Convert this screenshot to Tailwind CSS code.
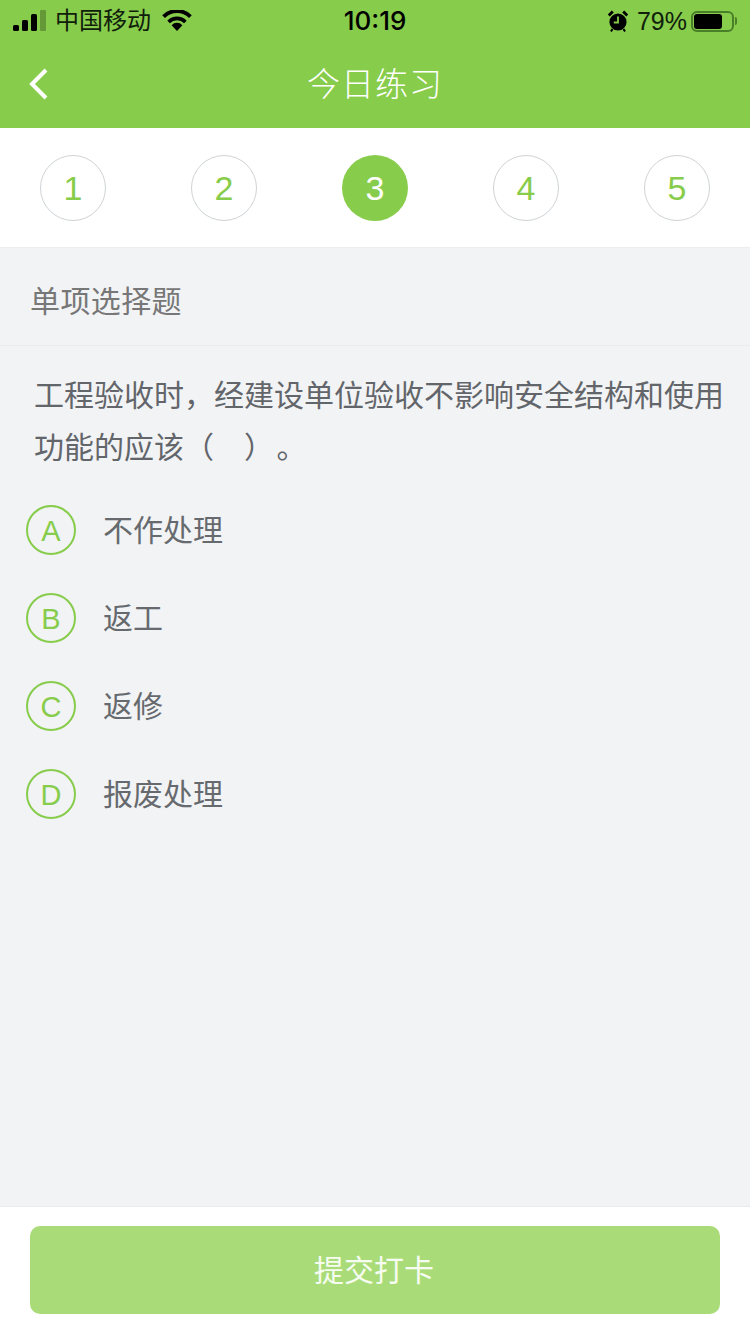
<!doctype html>
<html lang="zh-CN"><head><meta charset="utf-8"><script src="https://cdn.jsdelivr.net/npm/@tailwindcss/browser@4"></script></head>
<body class="m-0">
<div class="w-[750px] h-[1334px] flex flex-col overflow-hidden bg-[#f2f3f5] font-['Helvetica','Liberation_Sans','Noto_Sans_CJK_SC',sans-serif]">
  <header class="h-[128px] bg-[#87cc4b] shrink-0 flex flex-col">
    <div class="h-[42px] flex items-center justify-between text-black relative pl-[13px] pr-[13px]">
      <div class="flex items-center">
        <svg width="33" height="22" viewBox="0 0 33 22" class="mr-[9px]"><rect x="0" y="15" width="6" height="6" rx="1.5" fill="#000"/><rect x="9" y="10" width="6" height="11" rx="1.5" fill="#000"/><rect x="18" y="4" width="6" height="17" rx="1.5" fill="#000"/><rect x="27" y="0" width="6" height="21" rx="1" fill="#000" fill-opacity=".25"/></svg>
        <span class="text-[24px] leading-[40px] text-[#10200a]">中国移动</span>
        <svg width="30" height="22" viewBox="0 0 30 22" class="ml-[11px]"><path d="M15 21 9.6 15.2a7.4 7.4 0 0 1 10.8 0Z" fill="#000"/><path d="M6.6 11.9a11.8 11.8 0 0 1 16.8 0" fill="none" stroke="#000" stroke-width="3.6"/><path d="M1.6 6.6a19 19 0 0 1 26.8 0" fill="none" stroke="#000" stroke-width="4"/></svg>
      </div>
      <span class="absolute left-0 right-0 text-center font-['Inter'] text-[26px] font-medium leading-[40px] pointer-events-none">10:19</span>
      <div class="flex items-center">
        <svg width="20" height="22" viewBox="0 0 20 22" class="mr-[9px]"><circle cx="10" cy="12" r="8.6" fill="#000"/><path d="M10 6.5V12.5H5.8" fill="none" stroke="#87cc4b" stroke-width="1.8"/><path d="M.8 5.5 4.8 1.5M19.2 5.5 15.2 1.5" stroke="#000" stroke-width="2.8"/><path d="M4.5 19 3 21.5M15.5 19 17 21.5" stroke="#000" stroke-width="2"/></svg>
        <span class="text-[25px] leading-[40px] text-[#10200a]">79%</span>
        <div class="ml-[4px] flex items-center">
          <div class="w-[43px] h-[21px] rounded-[6px] border-2 border-[#4a7f2a] p-[1px] flex"><div class="w-[28px] h-full rounded-[3px] bg-black"></div></div>
          <div class="w-[2px] h-[8px] bg-[#4a7f2a] rounded-r-sm ml-[1px]"></div>
        </div>
      </div>
    </div>
    <div class="relative flex-1 flex items-center justify-center">
      <svg width="22" height="34" viewBox="0 0 22 34" class="absolute left-[28px] top-[25px]"><path d="M18 3 4 17l14 14" fill="none" stroke="#fff" stroke-width="4"/></svg>
      <h1 class="text-[33px] text-white font-light leading-[86px] tracking-[1px]">今日练习</h1>
    </div>
  </header>
  <nav class="h-[120px] shrink-0 bg-white border-b border-[#ebedf0] flex items-center justify-between px-[40px]">
    <div class="w-[66px] h-[66px] rounded-full border border-[#cfd3d6] flex items-center justify-center text-[34px] leading-[68px] text-[#87cc4b]">1</div>
    <div class="w-[66px] h-[66px] rounded-full border border-[#cfd3d6] flex items-center justify-center text-[34px] leading-[68px] text-[#87cc4b]">2</div>
    <div class="w-[66px] h-[66px] rounded-full bg-[#87cc4b] flex items-center justify-center text-[34px] leading-[68px] text-white">3</div>
    <div class="w-[66px] h-[66px] rounded-full border border-[#cfd3d6] flex items-center justify-center text-[34px] leading-[68px] text-[#87cc4b]">4</div>
    <div class="w-[66px] h-[66px] rounded-full border border-[#cfd3d6] flex items-center justify-center text-[34px] leading-[68px] text-[#87cc4b]">5</div>
  </nav>
  <main class="flex-1 flex flex-col min-h-0">
    <div class="h-[98px] shrink-0 border-b border-[#e9ebee] pl-[30px] pt-[10px] flex items-center text-[30px] tracking-[.4px] text-[#777]">单项选择题</div>
    <p class="pl-[34px] pr-[20px] pt-[24px] text-[30px] leading-[52px] text-[#62656a] m-0">工程验收时，经建设单位验收不影响安全结构和使用功能的应该（　）&hairsp;。</p>
    <ul class="mt-[12px] pl-[26px] flex flex-col">
      <li class="h-[88px] flex items-center"><span class="w-[50px] h-[50px] rounded-full border-2 border-[#87cc4b] flex items-center justify-center text-[29px] pt-[4px] text-[#87cc4b]">A</span><span class="ml-[27px] text-[30px] text-[#666a6e]">不作处理</span></li>
      <li class="h-[88px] flex items-center"><span class="w-[50px] h-[50px] rounded-full border-2 border-[#87cc4b] flex items-center justify-center text-[29px] pt-[4px] text-[#87cc4b]">B</span><span class="ml-[27px] text-[30px] text-[#666a6e]">返工</span></li>
      <li class="h-[88px] flex items-center"><span class="w-[50px] h-[50px] rounded-full border-2 border-[#87cc4b] flex items-center justify-center text-[29px] pt-[4px] text-[#87cc4b]">C</span><span class="ml-[27px] text-[30px] text-[#666a6e]">返修</span></li>
      <li class="h-[88px] flex items-center"><span class="w-[50px] h-[50px] rounded-full border-2 border-[#87cc4b] flex items-center justify-center text-[29px] pt-[4px] text-[#87cc4b]">D</span><span class="ml-[27px] text-[30px] text-[#666a6e]">报废处理</span></li>
    </ul>
  </main>
  <footer class="h-[128px] shrink-0 bg-white border-t border-[#e9ebee] px-[30px] pt-[19px]">
    <button class="w-[690px] h-[88px] pr-[2px] rounded-[10px] bg-[#a9dc78] text-white/90 text-[30px]">提交打卡</button>
  </footer>
</div>
</body></html>
